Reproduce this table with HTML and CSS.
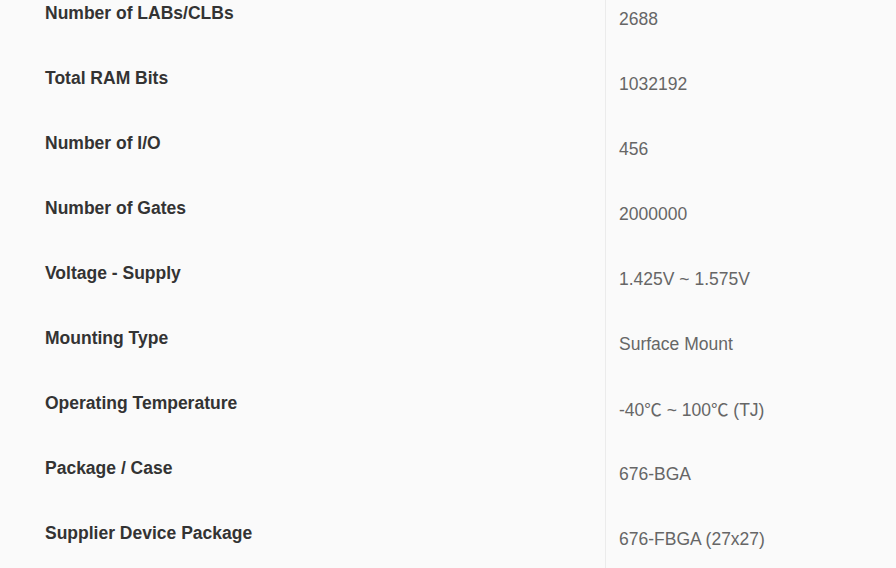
FILE: index.html
```html
<!DOCTYPE html>
<html>
<head>
<meta charset="utf-8">
<link rel="stylesheet" href="styles.css">
</head>
<body>
<div class="specs">
  <div class="row"><div class="label">Number of LABs/CLBs</div><div class="value">2688</div></div>
  <div class="row"><div class="label">Total RAM Bits</div><div class="value">1032192</div></div>
  <div class="row"><div class="label">Number of I/O</div><div class="value">456</div></div>
  <div class="row"><div class="label">Number of Gates</div><div class="value">2000000</div></div>
  <div class="row"><div class="label">Voltage - Supply</div><div class="value">1.425V ~ 1.575V</div></div>
  <div class="row"><div class="label">Mounting Type</div><div class="value">Surface Mount</div></div>
  <div class="row"><div class="label">Operating Temperature</div><div class="value">-40<span class="unit">℃</span> ~ 100<span class="unit">℃</span> (TJ)</div></div>
  <div class="row"><div class="label">Package / Case</div><div class="value">676-BGA</div></div>
  <div class="row"><div class="label">Supplier Device Package</div><div class="value">676-FBGA (27x27)</div></div>
</div>
</body>
</html>
```
FILE: styles.css
```css
html, body {
  margin: 0;
  padding: 0;
  background: #fafafa;
}
body {
  font-family: "Liberation Sans", Arial, sans-serif;
  font-size: 17.5px;
  line-height: 20px;
  overflow: hidden;
}
.specs {
  display: flex;
  flex-direction: column;
  width: 896px;
}
.row {
  display: grid;
  grid-template-columns: 606px 1fr;
  height: 65px;
}
.label {
  padding: 3px 0 0 45px;
  font-weight: bold;
  color: #333;
  border-right: 1px solid #ebebeb;
}
.value {
  padding: 9px 0 0 13px;
  color: #666;
}
.unit {
  font-family: "Noto Sans CJK SC", sans-serif;
}
```
